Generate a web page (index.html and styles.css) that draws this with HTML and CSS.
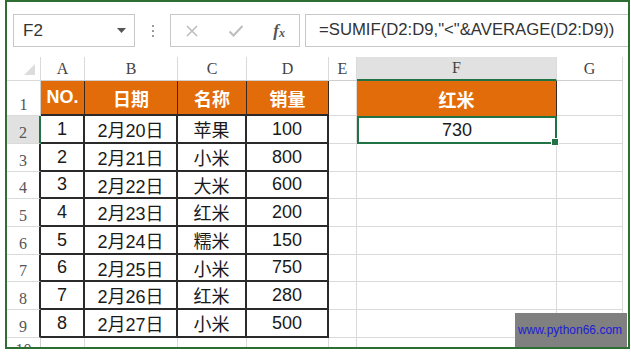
FILE: index.html
```html
<!DOCTYPE html>
<html lang="zh-CN">
<head>
    <meta charset="UTF-8">
    <meta name="viewport" content="width=device-width, initial-scale=1.0">
    <title>SUMIF</title>
    <link rel="stylesheet" href="styles.css">
</head>
<body>
    <div class="frame">
        <!-- formula bar -->
        <div class="toolbar">
            <div class="namebox">
                <span>F2</span>
                <svg class="caret" width="9" height="5" viewBox="0 0 9 5"><path d="M0 0h9L4.5 5z" fill="#555"/></svg>
            </div>
            <div class="dots"><i></i><i></i><i></i></div>
            <div class="fxbox">
                <svg width="14" height="14" viewBox="0 0 14 14"><path d="M2 2l10 10M12 2L2 12" stroke="#bdbdbd" stroke-width="1.6"/></svg>
                <svg width="16" height="14" viewBox="0 0 16 14"><path d="M1.5 7.5l4 4L14.5 2" stroke="#bdbdbd" stroke-width="2" fill="none"/></svg>
                <span class="fx">f<sub>x</sub></span>
            </div>
            <div class="formula">=SUMIF(D2:D9,"&lt;"&amp;AVERAGE(D2:D9))</div>
        </div>

        <!-- sheet -->
        <div class="sheet">
            <div class="corner"><svg width="11" height="11" viewBox="0 0 11 11"><path d="M11 0v11H0z" fill="#dcdcdc"/></svg></div>
            <div class="colhead">A</div>
            <div class="colhead">B</div>
            <div class="colhead">C</div>
            <div class="colhead">D</div>
            <div class="colhead">E</div>
            <div class="colhead active">F</div>
            <div class="colhead">G</div>

            <div class="rowhead">1</div>
            <div class="cell head">NO.</div>
            <div class="cell head">日期</div>
            <div class="cell head">名称</div>
            <div class="cell head">销量</div>
            <div class="cell"></div>
            <div class="cell head lone">红米</div>
            <div class="cell"></div>

            <div class="rowhead active">2</div>
            <div class="cell data">1</div>
            <div class="cell data">2月20日</div>
            <div class="cell data">苹果</div>
            <div class="cell data">100</div>
            <div class="cell"></div>
            <div class="cell selected">730</div>
            <div class="cell"></div>

            <div class="rowhead edge">3</div>
            <div class="cell data">2</div>
            <div class="cell data">2月21日</div>
            <div class="cell data">小米</div>
            <div class="cell data">800</div>
            <div class="cell"></div>
            <div class="cell"></div>
            <div class="cell"></div>

            <div class="rowhead edge">4</div>
            <div class="cell data">3</div>
            <div class="cell data">2月22日</div>
            <div class="cell data">大米</div>
            <div class="cell data">600</div>
            <div class="cell"></div>
            <div class="cell"></div>
            <div class="cell"></div>

            <div class="rowhead edge">5</div>
            <div class="cell data">4</div>
            <div class="cell data">2月23日</div>
            <div class="cell data">红米</div>
            <div class="cell data">200</div>
            <div class="cell"></div>
            <div class="cell"></div>
            <div class="cell"></div>

            <div class="rowhead edge">6</div>
            <div class="cell data">5</div>
            <div class="cell data">2月24日</div>
            <div class="cell data">糯米</div>
            <div class="cell data">150</div>
            <div class="cell"></div>
            <div class="cell"></div>
            <div class="cell"></div>

            <div class="rowhead edge">7</div>
            <div class="cell data">6</div>
            <div class="cell data">2月25日</div>
            <div class="cell data">小米</div>
            <div class="cell data">750</div>
            <div class="cell"></div>
            <div class="cell"></div>
            <div class="cell"></div>

            <div class="rowhead edge">8</div>
            <div class="cell data">7</div>
            <div class="cell data">2月26日</div>
            <div class="cell data">红米</div>
            <div class="cell data">280</div>
            <div class="cell"></div>
            <div class="cell"></div>
            <div class="cell"></div>

            <div class="rowhead edge">9</div>
            <div class="cell data">8</div>
            <div class="cell data">2月27日</div>
            <div class="cell data">小米</div>
            <div class="cell data">500</div>
            <div class="cell"></div>
            <div class="cell"></div>
            <div class="cell"></div>

            <div class="rowhead last">10</div>
            <div class="cell"></div>
            <div class="cell"></div>
            <div class="cell"></div>
            <div class="cell"></div>
            <div class="cell"></div>
            <div class="cell"></div>
            <div class="cell"></div>
        </div>

        <div class="watermark">www.python66.com</div>
    </div>
</body>
</html>
```
FILE: styles.css
```css
/* Reset */
* {
  box-sizing: border-box;
  margin: 0;
  padding: 0;
}

body {
  background: #fff;
  font-family: "Liberation Sans", "Noto Sans CJK SC", sans-serif;
  color: #222;
}

/* Green outer frame */
.frame {
  position: relative;
  margin-left: 5px;
  width: 625px;
  height: 349px;
  border: 2px solid #2f6e33;
  overflow: hidden;
  background: #fff;
}

/* Formula bar */
.toolbar {
  display: flex;
  align-items: center;
  height: 55px;
  padding: 11px 0 9px 6px;
}

.namebox {
  display: flex;
  align-items: center;
  justify-content: space-between;
  width: 122px;
  height: 33px;
  padding: 0 8px 0 9px;
  border: 1px solid #c8c8c8;
  font-size: 17px;
  color: #333;
}

.dots {
  display: flex;
  flex-direction: column;
  gap: 3px;
  margin: 0 16px 0 17px;
}

.dots i {
  width: 2px;
  height: 2px;
  background: #9a9a9a;
}

.fxbox {
  display: flex;
  align-items: center;
  justify-content: space-between;
  width: 130px;
  height: 33px;
  padding: 0 14px 0 14px;
  border: 1px solid #c8c8c8;
}

.fx {
  font-family: "Liberation Serif", serif;
  font-style: italic;
  font-weight: bold;
  font-size: 17px;
  color: #555;
}

.fx sub {
  font-size: 12px;
  vertical-align: -1px;
}

.formula {
  flex: 1;
  height: 33px;
  margin-left: 5px;
  padding: 5px 0 0 13px;
  border: 1px solid #c8c8c8;
  border-right: none;
  font-size: 16.7px;
  color: #333;
  white-space: nowrap;
}

/* Sheet grid */
.sheet {
  display: grid;
  grid-template-columns: 34px 44px 93px 69px 82px 28px 200px 66px;
  grid-template-rows: 24px 35px 28px 28px 27px 28px 28px 27px 28px 28px 28px;
}

.corner {
  display: flex;
  align-items: flex-end;
  justify-content: flex-end;
  padding: 0 5px 5px 0;
  border-right: 1px solid #dadada;
  border-bottom: 1px solid #dadada;
}

.colhead {
  display: flex;
  align-items: center;
  justify-content: center;
  font-family: "Liberation Serif", serif;
  font-size: 16px;
  color: #444;
  border-right: 1px solid #dadada;
  border-bottom: 1px solid #cfcfcf;
}

.colhead.active {
  background: #e1e1e1;
  border-bottom: 2px solid #217346;
}

.rowhead {
  display: flex;
  align-items: flex-end;
  justify-content: center;
  padding-bottom: 1px;
  font-family: "Liberation Serif", serif;
  font-size: 16px;
  color: #555;
  border-right: 1px solid #cfcfcf;
  border-bottom: 1px solid #dadada;
}

.rowhead.active {
  background: #e1e1e1;
  border-right: 2px solid #217346;
}

.rowhead.edge {
  border-right: 2px solid #2a2a2a;
}

/* Row 10 is cut by the frame, only the top of its number shows */
.rowhead.last {
  align-items: flex-start;
  padding-top: 3px;
}

.cell {
  display: flex;
  align-items: center;
  justify-content: center;
  border-right: 1px solid #dadada;
  border-bottom: 1px solid #dadada;
}

.cell.head {
  background: #e36c0a;
  color: #fff;
  font-weight: bold;
  font-size: 18px;
  border-right: 1px solid #3a2a20;
  border-bottom: 2px solid #2a2a2a;
}

.cell.head.lone {
  border-bottom: none;
  border-right: 1px solid #3a2a20;
}

.cell.data {
  font-size: 18px;
  color: #1a1a1a;
  border-right: 2px solid #2a2a2a;
  border-bottom: 2px solid #2a2a2a;
}

.cell.selected {
  position: relative;
  font-size: 18px;
  color: #1a1a1a;
  border: 2px solid #217346;
}

/* Fill handle of the selection */
.cell.selected::after {
  content: "";
  position: absolute;
  right: -4px;
  bottom: -4px;
  width: 6px;
  height: 6px;
  background: #217346;
  border: 1px solid #fff;
}

/* Watermark over the corner */
.watermark {
  position: absolute;
  right: 1px;
  bottom: 0;
  width: 112px;
  height: 34px;
  padding: 10px 0 0 3px;
  background: #808080;
  color: #1c1cd6;
  font-family: "Liberation Sans", sans-serif;
  font-size: 12px;
  white-space: nowrap;
}
```
